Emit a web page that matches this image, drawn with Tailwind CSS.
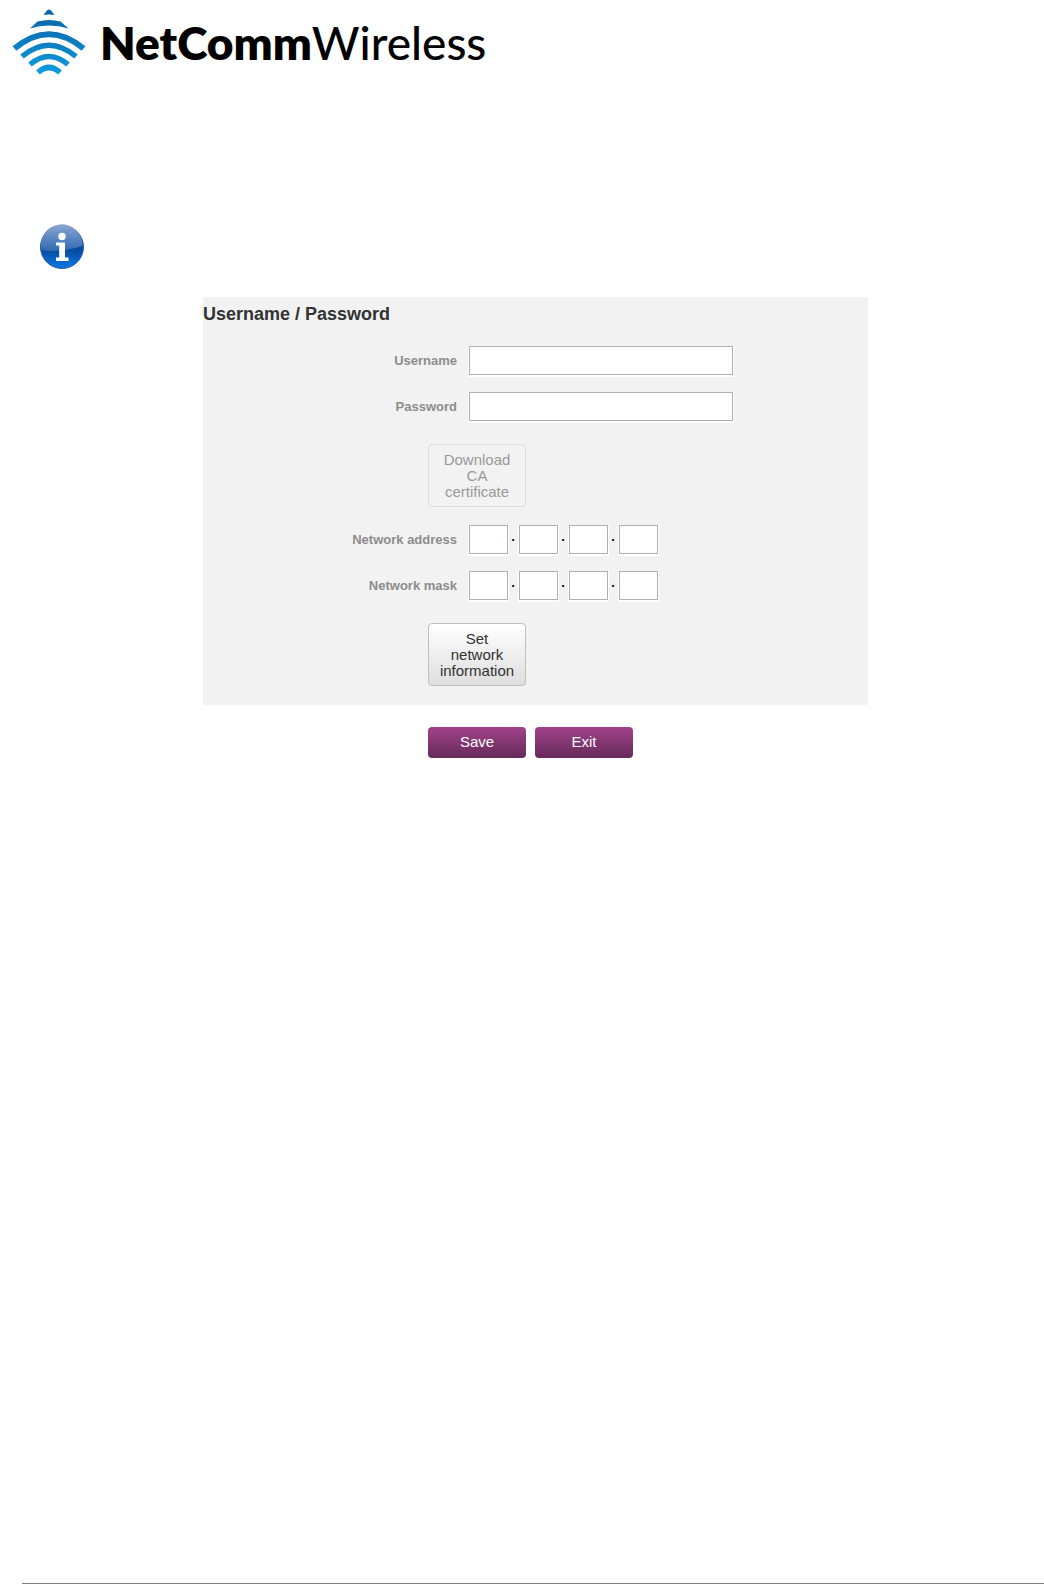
<!DOCTYPE html>
<html lang="en">
<head>
    <meta charset="UTF-8">
    <meta name="viewport" content="width=device-width, initial-scale=1.0">
    <title>NetComm Wireless</title>
    <script src="https://cdn.jsdelivr.net/npm/@tailwindcss/browser@4"></script>
</head>
<body class="min-h-screen flex flex-col bg-white font-['Liberation_Sans',Arial,sans-serif] text-[#333]">

    <header class="flex items-center gap-3.5 pl-3 pt-2">
        <svg class="w-[74px] h-[70px]" viewBox="0 0 74 70" fill="none" role="img" aria-label="NetComm Wireless logo">
            <defs>
                <linearGradient id="waves" gradientUnits="userSpaceOnUse" x1="0" y1="0" x2="0" y2="68">
                    <stop offset="0" stop-color="#0862a8"/>
                    <stop offset="0.4" stop-color="#0b76b9"/>
                    <stop offset="1" stop-color="#0e9fe0"/>
                </linearGradient>
            </defs>
            <path fill="url(#waves)" d="M31.500 7 L35 2.500 Q37 0.500 39 2.500 L42.500 7 Q37 6 31.500 7Z"/>
            <path fill="url(#waves)" d="M18 20.500 L25.500 13.500 Q37 10.500 48.500 13.500 L56.500 20.500 Q37 14.500 18 20.500Z"/>
            <g stroke="url(#waves)">
                <path stroke-width="6" d="M2.500 40.500 Q37 12 71.500 40.500"/>
                <path stroke-width="5.500" d="M10 48.500 Q37 26 64 48.500"/>
                <path stroke-width="5.500" d="M18 56.500 Q37 40.500 56 56.500"/>
                <path stroke-width="5.500" d="M26 64.500 Q37 54.500 48 64.500"/>
            </g>
        </svg>
        <span class="font-[Lato,sans-serif] font-medium text-[46px] leading-[70px] text-black"><b class="font-extrabold">NetComm</b>Wireless</span>
    </header>

    <main class="flex-1">
        <svg class="w-[46px] h-[46px] ml-[39px] mt-[146px]" viewBox="0 0 46 46" role="img" aria-label="Information">
            <defs>
                <linearGradient id="ball" x1="0" y1="0" x2="0" y2="1">
                    <stop offset="0" stop-color="#2d5f9e"/>
                    <stop offset="0.55" stop-color="#064a9c"/>
                    <stop offset="1" stop-color="#0a78e6"/>
                </linearGradient>
                <linearGradient id="gloss" x1="0" y1="0" x2="0" y2="1">
                    <stop offset="0" stop-color="#8ba6d0"/>
                    <stop offset="1" stop-color="#2f69b3"/>
                </linearGradient>
            </defs>
            <circle cx="23" cy="23" r="21.500" fill="url(#ball)" stroke="#2c5c9c"/>
            <path fill="url(#gloss)" d="M2.500 26 A20.800 20.800 0 1 1 43.500 22 Q36 24.500 27 26 Q14 28 2.500 26Z"/>
            <circle cx="23" cy="12.500" r="3.700" fill="#fff"/>
            <path fill="#fff" d="M17 18.500 H26 V33.500 H29.500 V37 H17 V33.500 H20.200 V21.500 H17Z"/>
        </svg>

        <form class="ml-[203px] mr-44 mt-[27px]" onsubmit="return false">
            <fieldset class="bg-[#f2f2f2] rounded-b-xs pb-[19px]">
                <h2 class="text-[18px] leading-[34px] font-bold">Username / Password</h2>

                <div class="flex items-center gap-3 mt-[15px]">
                    <label for="username" class="w-[254px] text-right text-[13px] font-bold text-[#8c8c8c]">Username</label>
                    <input type="text" id="username" class="w-[264px] h-[29px] px-2 bg-white border border-[#b0b0b0] shadow-[0_1px_0_1px_#fff]">
                </div>
                <div class="flex items-center gap-3 mt-[17px]">
                    <label for="password" class="w-[254px] text-right text-[13px] font-bold text-[#8c8c8c]">Password</label>
                    <input type="password" id="password" class="w-[264px] h-[29px] px-2 bg-white border border-[#b0b0b0] shadow-[0_1px_0_1px_#fff]">
                </div>

                <button type="button" disabled class="block w-[98px] h-[63px] ml-[225px] mt-[23px] px-2.5 rounded-sm border border-[#dcdcdc] text-[15px] leading-4 text-[#999]">Download CA certificate</button>

                <div class="flex items-center gap-3 mt-[18px]">
                    <label for="addr1" class="w-[254px] text-right text-[13px] font-bold text-[#8c8c8c]">Network address</label>
                    <div class="flex items-center">
                        <input type="text" id="addr1" class="w-[39px] h-[29px] px-1 bg-white border border-[#b0b0b0] shadow-[0_1px_0_1px_#fff]">
                        <span class="w-[11px] text-center text-[13px] font-bold text-black">·</span>
                        <input type="text" aria-label="Network address part 2" class="w-[39px] h-[29px] px-1 bg-white border border-[#b0b0b0] shadow-[0_1px_0_1px_#fff]">
                        <span class="w-[11px] text-center text-[13px] font-bold text-black">·</span>
                        <input type="text" aria-label="Network address part 3" class="w-[39px] h-[29px] px-1 bg-white border border-[#b0b0b0] shadow-[0_1px_0_1px_#fff]">
                        <span class="w-[11px] text-center text-[13px] font-bold text-black">·</span>
                        <input type="text" aria-label="Network address part 4" class="w-[39px] h-[29px] px-1 bg-white border border-[#b0b0b0] shadow-[0_1px_0_1px_#fff]">
                    </div>
                </div>
                <div class="flex items-center gap-3 mt-[17px]">
                    <label for="mask1" class="w-[254px] text-right text-[13px] font-bold text-[#8c8c8c]">Network mask</label>
                    <div class="flex items-center">
                        <input type="text" id="mask1" class="w-[39px] h-[29px] px-1 bg-white border border-[#b0b0b0] shadow-[0_1px_0_1px_#fff]">
                        <span class="w-[11px] text-center text-[13px] font-bold text-black">·</span>
                        <input type="text" aria-label="Network mask part 2" class="w-[39px] h-[29px] px-1 bg-white border border-[#b0b0b0] shadow-[0_1px_0_1px_#fff]">
                        <span class="w-[11px] text-center text-[13px] font-bold text-black">·</span>
                        <input type="text" aria-label="Network mask part 3" class="w-[39px] h-[29px] px-1 bg-white border border-[#b0b0b0] shadow-[0_1px_0_1px_#fff]">
                        <span class="w-[11px] text-center text-[13px] font-bold text-black">·</span>
                        <input type="text" aria-label="Network mask part 4" class="w-[39px] h-[29px] px-1 bg-white border border-[#b0b0b0] shadow-[0_1px_0_1px_#fff]">
                    </div>
                </div>

                <button type="button" class="block w-[98px] h-[63px] ml-[225px] mt-[23px] px-2.5 rounded-sm border border-[#bfbfbf] bg-linear-to-b from-white to-[#dedede] text-[15px] leading-4 text-[#333]">Set network information</button>
            </fieldset>

            <div class="flex gap-[9px] ml-[225px] mt-[22px]">
                <button type="submit" class="w-[98px] h-[31px] pb-0.5 rounded-sm bg-linear-to-b from-[#a2438b] to-[#662a59] text-[15px] leading-4 text-white">Save</button>
                <button type="button" class="w-[98px] h-[31px] pb-0.5 rounded-sm bg-linear-to-b from-[#a2438b] to-[#662a59] text-[15px] leading-4 text-white">Exit</button>
            </div>
        </form>
    </main>

    <footer class="ml-[22px] border-t border-[#808080]"></footer>
</body>
</html>
